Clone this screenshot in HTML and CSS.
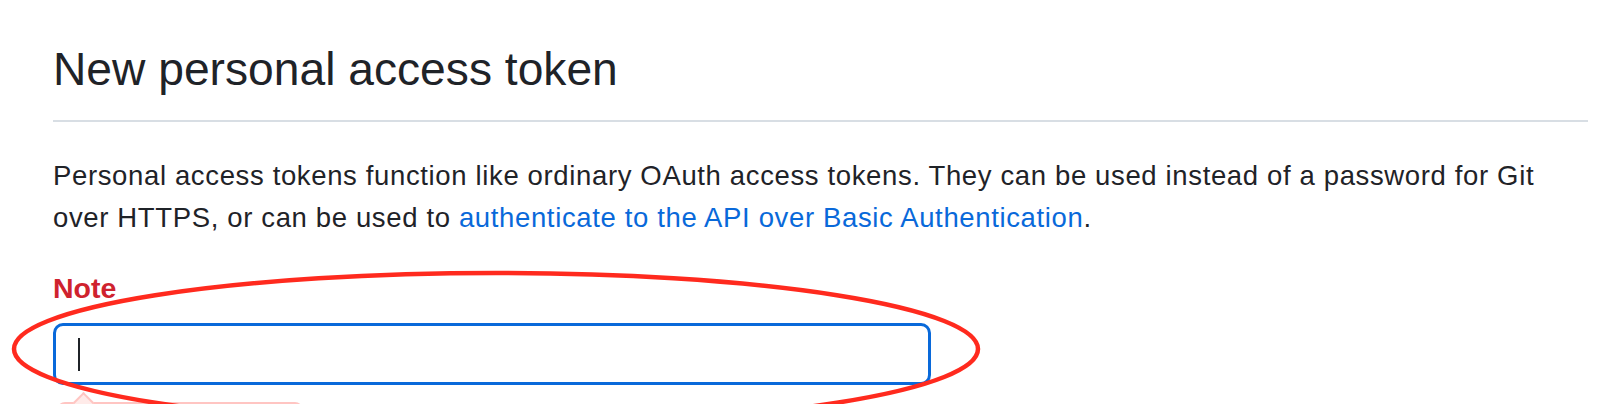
FILE: index.html
```html
<!DOCTYPE html>
<html lang="en">
<head>
<meta charset="utf-8">
<title>New personal access token</title>
<link rel="stylesheet" href="styles.css">
</head>
<body>
<main class="page">
  <h2 class="title">New personal access token</h2>
  <p class="intro">Personal access tokens function like ordinary OAuth access tokens. They can be used instead of a password for Git over HTTPS, or can be used to <a href="#" class="link">authenticate to the API over Basic Authentication</a>.</p>
  <div class="field">
    <label class="label">Note</label>
    <div class="input"><span class="caret"></span></div>
    <div class="error-pop"><span class="error-arrow"></span></div>
  </div>
</main>
<svg class="annotation" width="1598" height="404" viewBox="0 0 1598 404" xmlns="http://www.w3.org/2000/svg">
  <ellipse cx="496" cy="349" rx="482" ry="76" fill="none" stroke="#ff2a1e" stroke-width="4.5"/>
</svg>
</body>
</html>
```

FILE: styles.css
```css
html, body {
  margin: 0;
  padding: 0;
  background: #ffffff;
  overflow: hidden;
}

body {
  width: 1598px;
  height: 404px;
  position: relative;
  font-family: "Liberation Sans", Arial, Helvetica, sans-serif;
  color: #1f2328;
}

.page {
  height: 404px;
  box-sizing: border-box;
  overflow: hidden;
  padding: 41px 10px 0 53px;
}

.title {
  margin: 0;
  font-size: 46.2px;
  line-height: 57px;
  font-weight: 400;
  padding-bottom: 22px;
  border-bottom: 2px solid #d8dee4;
}

.intro {
  margin: 33px 0 0 0;
  width: 1510px;
  font-size: 27.5px;
  letter-spacing: 0.64px;
  line-height: 42px;
}

.link {
  color: #0969da;
  text-decoration: none;
}

.field {
  position: relative;
  margin-top: 28px;
}

.label {
  display: block;
  font-size: 28.5px;
  line-height: 42px;
  font-weight: 700;
  color: #cf222e;
}

.input {
  margin-top: 14px;
  width: 878px;
  height: 62px;
  box-sizing: border-box;
  border: 3px solid #0969da;
  border-radius: 10px;
  padding: 12px 0 0 22px;
}

.caret {
  display: block;
  width: 2px;
  height: 33px;
  background: #1f2328;
}

.error-pop {
  position: absolute;
  left: 4px;
  top: 135px;
  width: 246px;
  height: 30px;
  box-sizing: border-box;
  background: #ffebe9;
  border: 2px solid #ffc5c2;
  border-radius: 8px;
}

.error-arrow {
  position: absolute;
  left: 17px;
  top: -9px;
  width: 13px;
  height: 13px;
  background: #ffebe9;
  border-left: 2px solid #ffc5c2;
  border-top: 2px solid #ffc5c2;
  transform: rotate(45deg);
}

.annotation {
  position: absolute;
  left: 0;
  top: 0;
  pointer-events: none;
}
```
